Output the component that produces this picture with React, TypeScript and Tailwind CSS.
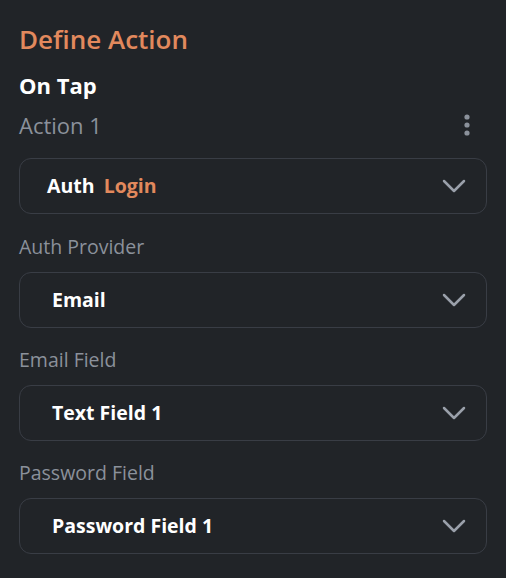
import React from 'react';

const font = { fontFamily: '"Open Sans", "Noto Sans", sans-serif' };

const Chevron = () => (
  <svg width="24" height="14" viewBox="0 0 24 14" fill="none" className="shrink-0">
    <path d="M2 2l10 10L22 2" stroke="#9aa0aa" strokeWidth="2.5" strokeLinecap="round" strokeLinejoin="round" />
  </svg>
);

const Select: React.FC<{ children: React.ReactNode; first?: boolean }> = ({ children, first }) => (
  <div
    className={`h-[56px] rounded-[12px] border border-[#393d45] flex items-center justify-between pr-[20px] ${
      first ? 'pl-[27px]' : 'pl-[32px]'
    }`}
  >
    <div className="text-[19.5px] leading-[24px] font-bold text-white">{children}</div>
    <Chevron />
  </div>
);

const Field: React.FC<{ label: string; value: string }> = ({ label, value }) => (
  <div className="flex flex-col">
    <div className="text-[19.5px] text-[#8b919b] h-[22px] leading-[22px] mb-[14px]">{label}</div>
    <Select>{value}</Select>
  </div>
);

export default function App() {
  return (
    <div className="w-[506px] h-[578px] bg-[#212428] px-[19px] pt-[25px]" style={font}>
      <h1 className="text-[26px] leading-[28px] font-semibold text-[#e2895d]">Define Action</h1>
      <div className="mt-[20px] text-[22px] leading-[24px] font-bold text-white">On Tap</div>
      <div className="mt-[16px] flex items-center justify-between">
        <span className="text-[22px] leading-[24px] text-[#8b919b]">Action 1</span>
        <svg width="6" height="22" viewBox="0 0 6 22" className="mr-[17px]">
          <circle cx="3" cy="3" r="2.6" fill="#8b919b" />
          <circle cx="3" cy="11" r="2.6" fill="#8b919b" />
          <circle cx="3" cy="19" r="2.6" fill="#8b919b" />
        </svg>
      </div>
      <div className="mt-[21px]">
        <Select first>
          Auth <span className="ml-[4px] text-[#e2895d]">Login</span>
        </Select>
      </div>
      <div className="mt-[22px] flex flex-col gap-[21px]">
        <Field label="Auth Provider" value="Email" />
        <Field label="Email Field" value="Text Field 1" />
        <Field label="Password Field" value="Password Field 1" />
      </div>
    </div>
  );
}
